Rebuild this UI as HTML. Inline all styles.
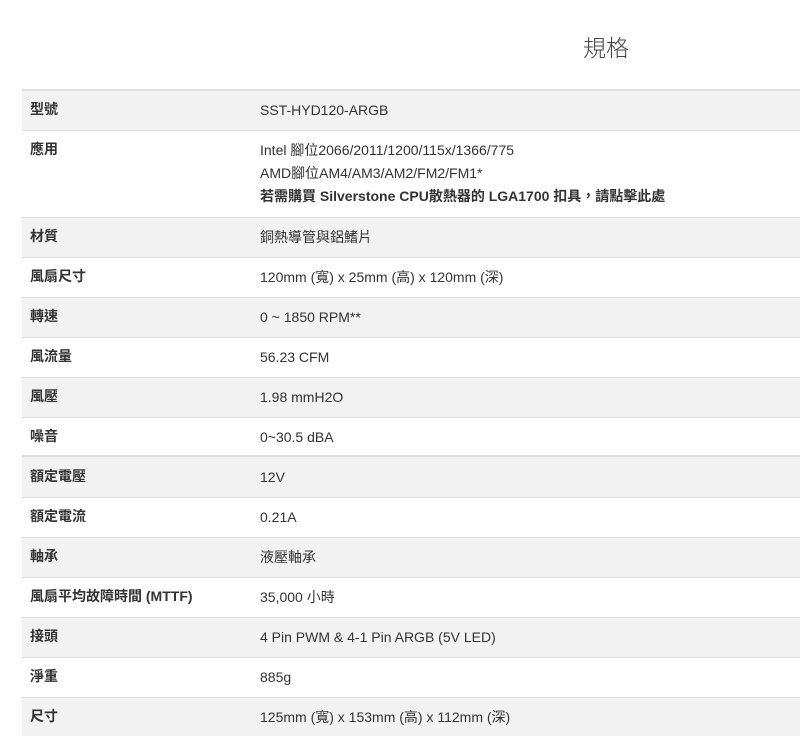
<!DOCTYPE html>
<html><head><meta charset="utf-8"><style>
html,body{margin:0;padding:0;background:#fff;width:800px;height:736px;overflow:hidden}
body{font-family:"Liberation Sans","Noto Sans CJK TC",sans-serif;font-size:14px;color:#333;position:relative}
.t{position:absolute;left:583px;top:29px;font-size:23px;color:#444;font-weight:300}
.r{position:absolute;left:22px;width:778px;border-top:1px solid #ddd;box-sizing:border-box}
.g{background:#f2f2f2}
.l{position:absolute;left:8px;top:8px;font-weight:bold;line-height:20px}
.v{position:absolute;left:238px;top:8px;line-height:23px}
</style></head><body>
<div class="t">規格</div>
<div class="r g" style="top:89px;height:41px;border-top:2px solid #ddd"><div class="l">型號</div><div class="v">SST-HYD120-ARGB</div></div>
<div class="r" style="top:130px;height:87px"><div class="l">應用</div><div class="v">Intel 腳位2066/2011/1200/115x/1366/775<br>AMD腳位AM4/AM3/AM2/FM2/FM1*<br><b>若需購買 Silverstone CPU散熱器的 LGA1700 扣具，請點擊此處</b></div></div>
<div class="r g" style="top:217px;height:40px"><div class="l">材質</div><div class="v">銅熱導管與鋁鰭片</div></div>
<div class="r" style="top:257px;height:40px"><div class="l">風扇尺寸</div><div class="v">120mm (寬) x 25mm (高) x 120mm (深)</div></div>
<div class="r g" style="top:297px;height:40px"><div class="l">轉速</div><div class="v">0 ~ 1850 RPM**</div></div>
<div class="r" style="top:337px;height:40px"><div class="l">風流量</div><div class="v">56.23 CFM</div></div>
<div class="r g" style="top:377px;height:40px"><div class="l">風壓</div><div class="v">1.98 mmH2O</div></div>
<div class="r" style="top:417px;height:40px"><div class="l">噪音</div><div class="v">0~30.5 dBA</div></div>
<div class="r g" style="top:455px;height:42px;border-top:2px solid #ddd"><div class="l" style="top:9px">額定電壓</div><div class="v" style="top:9px">12V</div></div>
<div class="r" style="top:497px;height:40px"><div class="l">額定電流</div><div class="v">0.21A</div></div>
<div class="r g" style="top:537px;height:40px"><div class="l">軸承</div><div class="v">液壓軸承</div></div>
<div class="r" style="top:577px;height:40px"><div class="l">風扇平均故障時間 (MTTF)</div><div class="v">35,000 小時</div></div>
<div class="r g" style="top:617px;height:40px"><div class="l">接頭</div><div class="v">4 Pin PWM &amp; 4-1 Pin ARGB (5V LED)</div></div>
<div class="r" style="top:657px;height:40px"><div class="l">淨重</div><div class="v">885g</div></div>
<div class="r g" style="top:697px;height:40px"><div class="l">尺寸</div><div class="v">125mm (寬) x 153mm (高) x 112mm (深)</div></div>
</body></html>
